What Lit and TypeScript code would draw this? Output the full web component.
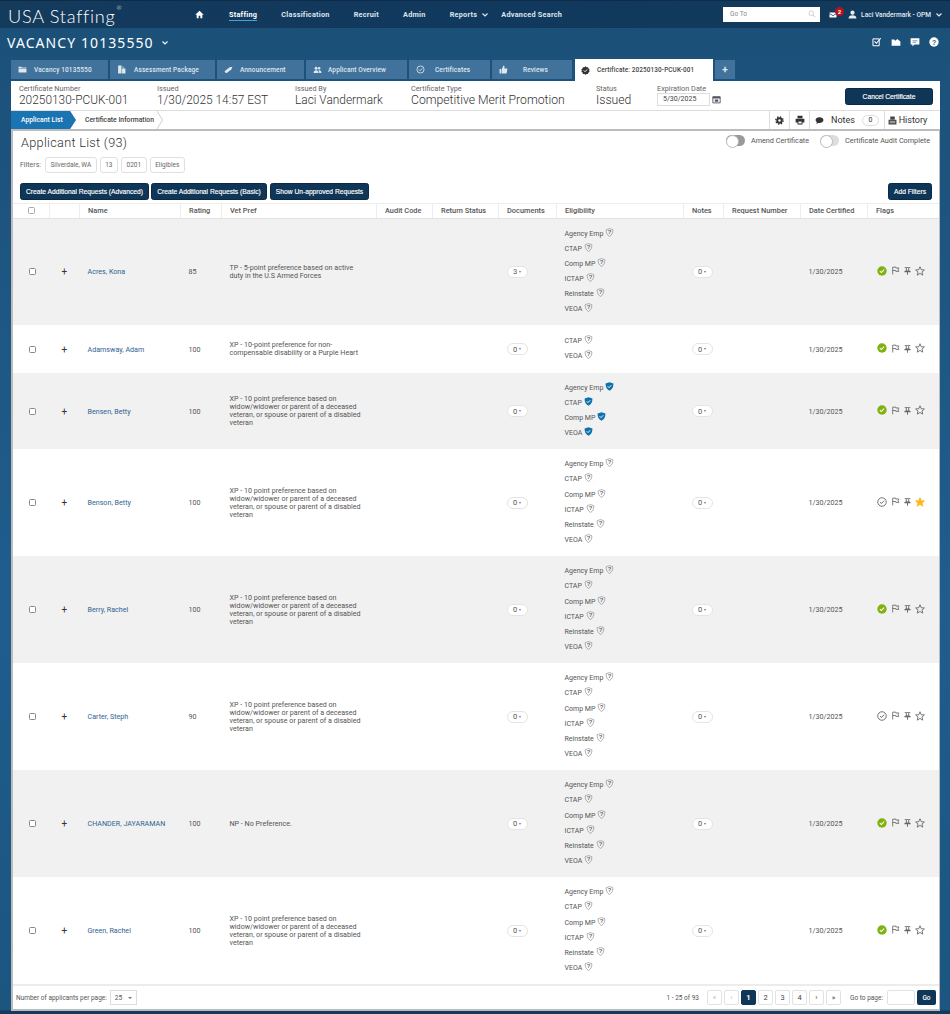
import { LitElement, html, css, svg } from "lit";
import { customElement } from "lit/decorators.js";

const XP = "XP - 10 point preference based on widow/widower or parent of a deceased veteran, or spouse or parent of a disabled veteran";
const ALL = ["Agency Emp", "CTAP", "Comp MP", "ICTAP", "Reinstate", "VEOA"];
interface Row { name: string; rating: string; vet: string; docs: string; elig: string[]; verified?: boolean; done: boolean; star?: boolean; }
const ROWS: Row[] = [
  { name: "Acres, Kona", rating: "85", vet: "TP - 5-point preference based on active duty in the U.S Armed Forces", docs: "3", elig: ALL, done: true },
  { name: "Adamsway, Adam", rating: "100", vet: "XP - 10-point preference for non-compensable disability or a Purple Heart", docs: "0", elig: ["CTAP", "VEOA"], done: true },
  { name: "Bensen, Betty", rating: "100", vet: XP, docs: "0", elig: ["Agency Emp", "CTAP", "Comp MP", "VEOA"], verified: true, done: true },
  { name: "Benson, Betty", rating: "100", vet: XP, docs: "0", elig: ALL, done: false, star: true },
  { name: "Berry, Rachel", rating: "100", vet: XP, docs: "0", elig: ALL, done: true },
  { name: "Carter, Steph", rating: "90", vet: XP, docs: "0", elig: ALL, done: false },
  { name: "CHANDER, JAYARAMAN", rating: "100", vet: "NP - No Preference.", docs: "0", elig: ALL, done: true },
  { name: "Green, Rachel", rating: "100", vet: XP, docs: "0", elig: ALL, done: true },
];
const COLS: [string, number][] = [["", 36], ["", 30], ["Name", 101], ["Rating", 41], ["Vet Pref", 155], ["Audit Code", 56], ["Return Status", 66], ["Documents", 58], ["Eligibility", 127], ["Notes", 40], ["Request Number", 77], ["Date Certified", 67], ["Flags", 72]];
const TABS: [string, number, string, number][] = [["Vacancy 10135550", 97, "folder", 7], ["Assessment Package", 105, "copy", 8], ["Announcement", 87, "mega", 7], ["Applicant Overview", 101, "users", 6], ["Certificates", 81, "check", 10], ["Reviews", 80, "thumb", 15]];

const ic = (body: unknown, size = 10, vb = "0 0 16 16") => html`<svg class="ic" width=${size} height=${size} viewBox=${vb}>${body}</svg>`;
const icons: Record<string, unknown> = {
  folder: svg`<path fill="currentColor" d="M1 3h5l1 1.500h8V6H1zM1 7h14v6.500H1z"/>`,
  copy: svg`<path fill="currentColor" d="M2 1h6v4h2V2l3 3H8v10H2zM9 6h6v9H9z"/>`,
  mega: svg`<path fill="currentColor" d="M1 11L10 4l5-1-2 5-8 6H3z"/>`,
  users: svg`<path fill="currentColor" d="M5.500 3a2.500 2.500 0 1 1 0 5.500 2.500 2.500 0 0 1 0-5.500zM1 14c0-3 2-4.500 4.500-4.500S10 11 10 14zM11 3.500a2.200 2.200 0 1 1 0 4.500 2.200 2.200 0 0 1 0-4.500zM11 14c0-2-.5-3.500-1.500-4.500 3-1 5.500.8 5.500 4.500z"/>`,
  check: svg`<circle cx="8" cy="8" r="6.300" fill="none" stroke="currentColor" stroke-width="1.500"/><path d="M5 8l2.200 2.200L11 6" fill="none" stroke="currentColor" stroke-width="1.500"/>`,
  thumb: svg`<path fill="currentColor" d="M1 7h3v8H1zM5 7l3-6c2 0 2 2 1.500 5H15l-1.500 9H5z"/>`,
};
const badgeCheck = ic(svg`<path fill="#333" d="M8 .5l2 1.500 2.500 0 .8 2.400 2 1.500L14.500 8l.8 2.100-2 1.500-.8 2.400-2.500 0-2 1.500-2-1.500-2.500 0-.8-2.400-2-1.500L1.500 8 .7 5.900l2-1.500L3.500 2l2.500 0z"/><path d="M5 8l2.200 2.200L11 6" fill="none" stroke="#fff" stroke-width="1.600"/>`, 9);
const shieldQ = ic(svg`<path d="M8 1l6 2c0 6-1.500 9.500-6 12C3.500 12.500 2 9 2 3z" fill="none" stroke="#8f8f8f" stroke-width="1.200"/><text x="8" y="11.500" font-size="10.500" font-weight="700" text-anchor="middle" fill="#666" font-family="Liberation Sans, sans-serif">?</text>`, 9);
const shieldOk = ic(svg`<path d="M8 .5l7 2.300c0 6.700-2 10-7 12.700C3 12.800 1 9.500 1 2.800z" fill="#0f71ab"/><path d="M4.800 7.600l2.300 2.300 4-4.100" fill="none" stroke="#fff" stroke-width="1.700"/>`, 9);
const flagIc = ic(svg`<path d="M3 15V2h5.500v1.500H14l-1.500 3 1.500 3H8.500V8H3" fill="none" stroke="#666" stroke-width="1.500"/>`, 9);
const pinIc = ic(svg`<path fill="#666" d="M3 2h10v1.600h-2V8l2.500 1.500V11H8.800v4.500H7.200V11H2.500V9.500L5 8V3.600H3zM6.600 3.600V8h2.800V3.600z"/>`, 9);
const starPts = "8,1.200 10,6 15,6.300 11.200,9.600 12.400,14.600 8,11.900 3.600,14.600 4.800,9.600 1,6.300 6,6";
const starIc = (on?: boolean) => ic(svg`<polygon points=${starPts} fill=${on ? "#fdb81e" : "none"} stroke=${on ? "#fdb81e" : "#666"} stroke-width="1.400"/>`, 10);
const doneIc = (done: boolean) => done
  ? ic(svg`<circle cx="8" cy="8" r="7.500" fill="#7fb10f"/><path d="M4.500 8.200l2.400 2.300 4.500-4.700" fill="none" stroke="#fff" stroke-width="1.700"/>`, 10)
  : ic(svg`<circle cx="8" cy="8" r="6.800" fill="none" stroke="#555" stroke-width="1.300"/><path d="M4.800 8.200l2.300 2.200 4.200-4.500" fill="none" stroke="#555" stroke-width="1.400"/>`, 10);

@customElement("app-root")
export class AppRoot extends LitElement {
  static styles = css`
    :host { display: block; width: 950px; height: 1014px; overflow: hidden; background: linear-gradient(#1b5078, #205d8d 60%, #1b5580 99.6%, #123a5c 99.7%); font-family: Roboto, sans-serif; color: #555; font-size: 7.500px; }
    * { box-sizing: border-box; }
    .ic { display: block; flex: none; }
    .top { height: 28px; background: linear-gradient(90deg, #143a5c, #11395d 50%, #123a5c); border-top: 1px solid #0e2c47; display: flex; align-items: center; color: #fff; }
    .logo { font-family: Lato, sans-serif; font-weight: 300; font-size: 18.200px; letter-spacing: .7px; margin-left: 8px; width: 187px; display: flex; position: relative; top: 1px; white-space: nowrap; }
    .logo sup { font-size: 6px; line-height: 1; margin-left: 1px; }
    .nav { display: flex; align-items: center; gap: 24px; font-weight: 700; font-size: 7.300px; letter-spacing: .25px; color: #dbe5ee; white-space: nowrap; }
    .nav .home { color: #fff; margin-right: 1px; }
    .nav .sel { color: #fff; border-bottom: 1px solid #3fa3e0; padding-bottom: 1px; margin-top: 1px; }
    .caret { display: inline-block; margin-left: 5px; }
    .nav .adv { margin-left: -11px; }
    .goto { margin-left: auto; width: 97px; height: 15px; background: #fff; color: #888; font-size: 6.500px; display: flex; align-items: center; justify-content: space-between; padding: 0 4px 0 7px; margin-top: -1px; }
    .mail { position: relative; margin-left: 9px; color: #fff; }
    .mail b { position: absolute; left: 6px; top: -4px; width: 9px; height: 9px; border-radius: 50%; background: #b3121d; font-size: 6px; color: #fff; display: flex; justify-content: center; align-items: center; }
    .user { display: flex; align-items: center; margin: 0 8px 0 11px; gap: 4px; color: #e4ebf2; font-size: 6.600px; font-weight: 500; white-space: nowrap; }
    .user .caret { margin-left: 1px; }
    .vac { height: 32px; display: flex; align-items: center; padding: 0 11px 4px 7px; color: #fff; }
    .vac h1 { margin: 0; font-weight: 400; font-size: 14px; letter-spacing: 1.080px; font-family: "Noto Sans", sans-serif; white-space: nowrap; }
    .vac .tools { margin-left: auto; display: flex; gap: 9px; color: #fff; }
    .tabs { height: 21px; padding-left: 11px; display: flex; align-items: flex-start; gap: 2px; }
    .tab { height: 19px; background: #41729b; color: #dfe8ef; display: flex; align-items: center; padding-left: 7px; font-size: 6.500px; font-weight: 500; letter-spacing: .12px; flex: none; white-space: nowrap; }
    .tab.active { background: #fff; color: #444; height: 22px; margin-left: 1px; margin-top: -1px; padding-left: 6px; gap: 7px; font-size: 6.400px; }
    .tab.plus { justify-content: center; padding: 0; font-size: 10px; font-weight: 700; }
    .card { margin: 0 10px 0 11px; background: #fff; }
    .cert { height: 30px; display: flex; padding: 3px 7px 0 8px; border-bottom: 1px solid #ddd; }
    .cf { display: flex; flex-direction: column; flex: none; }
    .cf label { font-size: 7.300px; color: #666; line-height: 9px; white-space: nowrap; }
    .cf span { font-size: 11.900px; font-weight: 300; color: #333; line-height: 14px; white-space: nowrap; }
    .cf span.wide { font-size: 12.200px; }
    .date { display: flex; gap: 2px; align-items: center; }
    .date div { width: 53px; height: 13px; border: 1px solid #ddd; font-size: 7px; padding-left: 5px; line-height: 11px; color: #444; }
    .btn { background: #0f3557; color: #fff; border-radius: 2.500px; border: 1px solid #0a2a47; font: 400 6.700px "Liberation Sans", sans-serif; -webkit-text-stroke: .15px #fff; display: flex; align-items: center; justify-content: center; height: 17px; flex: none; white-space: nowrap; }
    .cancel { width: 88px; margin: 4px 0 0 auto; }
    .crumb { height: 18px; display: flex; align-items: stretch; }
    .bc1 { width: 65px; background: #1b74b2; color: #fff; font-weight: 500; font-size: 6.800px; display: flex; align-items: center; padding-left: 10px; clip-path: polygon(0 0, 91% 0, 100% 50%, 91% 100%, 0 100%); white-space: nowrap; }
    .bc2 { width: 88px; margin-left: -1px; font-size: 6.800px; font-weight: 500; color: #444; display: flex; align-items: center; padding-left: 10px; position: relative; white-space: nowrap; }
    .bc2 svg { position: absolute; right: 0; top: 0; }
    .ctools { margin-left: auto; display: flex; margin-right: 10px; }
    .ctools > div { border-left: 1px solid #ddd; display: flex; align-items: center; justify-content: center; color: #333; }
    .t20 { width: 20px; }
    .tnotes { width: 75px; gap: 7px; font-size: 9px; color: #666; }
    .tnotes i { font-style: normal; border: 1px solid #ddd; border-radius: 7px; width: 17px; height: 11px; display: flex; justify-content: center; align-items: center; font-size: 7px; }
    .thist { width: 46px; gap: 2px; font-size: 9px; color: #555; }
    .main { border: 2px solid #bcbcbc; border-width: 2px 1px 2px 2px; height: 882px; background: #fff; display: flex; flex-direction: column; }
    .head { height: 72px; padding: 3px 7px 0 7px; display: flex; flex-direction: column; position: relative; }
    .hrow { display: flex; align-items: flex-start; }
    h2 { margin: 0; font-weight: 300; font-size: 12.700px; color: #333; line-height: 18px; letter-spacing: .3px; margin-left: 1px; white-space: nowrap; }
    .tog { display: flex; align-items: center; gap: 6px; margin-left: 11px; font-size: 7.250px; color: #555; margin-top: 1px; white-space: nowrap; }
    .tog i { display: block; width: 19px; height: 11px; border-radius: 6px; background: #999; position: relative; }
    .tog i.off { background: #ddd; }
    .tog i::after { content: ""; position: absolute; left: 0; top: 0; width: 11px; height: 11px; border-radius: 50%; background: #fff; border: 1px solid #bbb; }
    .hrow .tog:last-child { margin-right: 2px; }
    .filters { display: flex; align-items: center; gap: 3px; height: 16px; margin-top: 5px; font-size: 6.500px; color: #666; }
    .filters span { border: 1px solid #e0e0e0; border-radius: 3px; height: 16px; display: flex; align-items: center; padding: 0 4.500px; white-space: nowrap; }
    .filters label { width: 22px; font-size: 7px; }
    .btns { display: flex; gap: 2px; margin-top: 10px; }
    .btns .w3 { margin-left: 1px; }
    .btns .add { margin-left: auto; }
    table { border-collapse: collapse; table-layout: fixed; width: 926px; }
    th { height: 15px; font-weight: 500; font-size: 7.400px; color: #555; text-align: left; padding: 0 0 1px 8.500px; border-left: 1px solid #eee; border-top: 1px solid #eee; border-bottom: 1px solid #e2e2e2; white-space: nowrap; overflow: hidden; }
    th:first-child { border-left: 0; }
    td { padding: 0 0 0 8.500px; font-size: 7.150px; color: #555; vertical-align: middle; }
    tr.l2 td { height: 48px; }
    tr.l4 td { height: 76px; }
    tr.l6 td { height: 107px; }
    tbody tr:nth-child(odd) { background: #f1f1f1; }
    .cb { width: 7px; height: 7px; border: 1px solid #888; border-radius: 1.500px; background: #fff; margin-left: 7px; }
    th .cb { margin-left: 6px; border-color: #aaa; }
    td.plus { font-size: 10px; color: #333; padding-left: 12.500px; }
    td.name { color: #2f6393; }
    .vet { width: 136px; line-height: 8px; color: #555; }
    .pill { width: 21px; height: 12px; border: 1px solid #e4e4e4; border-radius: 6px; background: #fff; display: flex; align-items: center; justify-content: center; gap: 2px; font-size: 7.500px; }
    .pill::after { content: ""; border: 1.500px solid transparent; border-top: 2px solid #777; border-bottom: 0; }
    .el { height: 15.100px; display: flex; align-items: center; gap: 2px; line-height: 15px; font-size: 7px; }
    .el .ic { margin-top: -4px; }
    .flags { display: flex; gap: 3px; align-items: center; margin-top: -2px; padding-left: 1.500px; }
    .flags .ic:first-child { margin-right: 1px; }
    .spacer { flex: 1; }
    .foot { height: 25px; border-top: 2px solid #ececec; display: flex; align-items: center; padding: 0 3px 0 3px; font-size: 6.500px; color: #555; white-space: nowrap; }
    .sel25 { width: 27px; height: 15px; border: 1px solid #ddd; margin-left: 3px; display: flex; align-items: center; justify-content: space-between; padding: 0 4px; }
    .sel25::after { content: ""; border: 2px solid transparent; border-top: 2.500px solid #777; border-bottom: 0; }
    .count { margin-left: auto; margin-right: 8px; }
    .pg { width: 15px; height: 15px; border: 1px solid #e2e2e2; border-radius: 2px; display: flex; align-items: center; justify-content: center; margin-right: 2px; color: #444; font-size: 7.500px; }
    .pg.dis { color: #bbb; }
    .pg.cur { background: #0f3557; border-color: #0f3557; color: #fff; font-weight: 700; }
    .gotxt { margin: 0 4px 0 7px; }
    .inp { width: 28px; height: 15px; border: 1px solid #e2e2e2; border-radius: 2px; margin-right: 2px; }
    .go { width: 19px; height: 15px; background: #0f3557; color: #fff; border-radius: 2px; display: flex; align-items: center; justify-content: center; font-weight: 500; }
  `;

  render() {
    const chev = html`<svg class="caret" width="6" height="4" viewBox="0 0 6 4"><path d="M.5.500L3 3 5.500.500" fill="none" stroke="currentColor" stroke-width="1.200"/></svg>`;
    return html`
      <div class="top">
        <div class="logo">USA Staffing<sup>®</sup></div>
        <div class="nav">
          <span class="home">${ic(svg`<path fill="currentColor" d="M8 1.500L15.500 8.500H13V14.500H9.500V10h-3v4.500H3V8.500H.5z"/>`, 9)}</span>
          <span class="sel">Staffing</span><span>Classification</span><span>Recruit</span><span>Admin</span>
          <span>Reports${chev}</span><span class="adv">Advanced Search</span>
        </div>
        <div class="goto">Go To ${ic(svg`<circle cx="6.500" cy="6.500" r="4.500" fill="none" stroke="#bbb" stroke-width="1.400"/><path d="M10 10l4.500 4.500" stroke="#bbb" stroke-width="1.600"/>`, 8)}</div>
        <div class="mail">${ic(svg`<path fill="currentColor" d="M1 3h14v1.500L8 8.500 1 4.500zM1 6l7 4 7-4v7H1z"/>`, 8)}<b>2</b></div>
        <div class="user">${ic(svg`<path fill="currentColor" d="M8 1a3.500 3.500 0 1 1 0 7.500A3.500 3.500 0 0 1 8 1zM1 15c0-4 3-5.500 7-5.500s7 1.500 7 5.500z"/>`, 9)}<span>Laci Vandermark - OPM</span>${chev}</div>
      </div>
      <div class="vac">
        <h1>VACANCY 10135550</h1><span style="margin-left:3px">${chev}</span>
        <div class="tools">
          ${ic(svg`<path fill="none" stroke="currentColor" stroke-width="1.600" d="M1.500 3h10v11h-10z"/><path fill="none" stroke="currentColor" stroke-width="1.800" d="M4 7l3 3 7-8"/>`)}
          ${ic(svg`<path fill="currentColor" d="M1 4h4l2 2 3-3 5 4v7H1z"/>`)}
          ${ic(svg`<path fill="currentColor" d="M1 2h14v10H7l-3 3v-3H1z"/><path stroke="#2b6a9b" d="M4 6h8M4 8.500h6"/>`)}
          ${html`<svg class="ic" width="10" height="10" viewBox="0 0 16 16"><circle cx="8" cy="8" r="7.500" fill="currentColor"/><text x="8" y="12" font-size="11" font-weight="700" text-anchor="middle" fill="#215f90" font-family="Liberation Sans, sans-serif">?</text></svg>`}
        </div>
      </div>
      <div class="tabs">
        ${TABS.map(([t, w, i, g]) => html`<div class="tab" style="width:${w}px;gap:${g}px">${ic(icons[i], 9)}<span>${t}</span></div>`)}
        <div class="tab active" style="width:138px">${badgeCheck}<span>Certificate: 20250130-PCUK-001</span></div>
        <div class="tab plus" style="width:20px">+</div>
      </div>
      <div class="card">
        <div class="cert">
          <div class="cf" style="width:138px"><label>Certificate Number</label><span>20250130-PCUK-001</span></div>
          <div class="cf" style="width:138px"><label>Issued</label><span>1/30/2025 14:57 EST</span></div>
          <div class="cf" style="width:116px"><label>Issued By</label><span>Laci Vandermark</span></div>
          <div class="cf" style="width:185px"><label>Certificate Type</label><span class="wide">Competitive Merit Promotion</span></div>
          <div class="cf" style="width:61px"><label>Status</label><span class="wide">Issued</span></div>
          <div class="cf"><label>Expiration Date</label><div class="date"><div>5/30/2025</div>${ic(svg`<path fill="none" stroke="#556" stroke-width="1.600" d="M1.500 3h13v11h-13z"/><path fill="#556" d="M1.500 3h13v3h-13zM5 8h6v4H5z"/>`, 9)}</div></div>
          <div class="btn cancel">Cancel Certificate</div>
        </div>
        <div class="crumb">
          <div class="bc1">Applicant List</div>
          <div class="bc2">Certificate Information<svg width="6" height="18" viewBox="0 0 6 18"><path d="M0 0l5.500 9L0 18" fill="none" stroke="#ccc"/></svg></div>
          <div class="ctools">
            <div class="t20">${ic(svg`<circle cx="8" cy="8" r="4" fill="none" stroke="#333" stroke-width="3.500"/><circle cx="8" cy="8" r="6.500" fill="none" stroke="#333" stroke-width="2.500" stroke-dasharray="2.500 2.600"/>`, 9)}</div>
            <div class="t20">${ic(svg`<path fill="#333" d="M4 1h8v4H4zM1 6h14v6h-3v3H4v-3H1z"/><path fill="#fff" d="M5.500 10.500h5V13.500h-5z"/>`, 10)}</div>
            <div class="tnotes">${ic(svg`<path fill="#333" d="M8 2c4 0 7 2.300 7 5.300s-3 5.300-7 5.300c-.8 0-1.500 0-2.200-.2L2.500 14l.8-3C1.800 10 1 8.700 1 7.300 1 4.300 4 2 8 2z"/>`, 9)}<span>Notes</span><i>0</i></div>
            <div class="thist">${ic(svg`<path fill="#444" d="M4 1h8v5H4zM1 6.500h14V15H1z"/><path stroke="#fff" d="M3 9.500h10M3 12h10"/>`, 9)}<span>History</span></div>
          </div>
        </div>
        <div class="main">
          <div class="head">
            <div class="hrow"><h2>Applicant List (93)</h2><div class="spacer"></div>
              <div class="tog"><i></i>Amend Certificate</div>
              <div class="tog"><i class="off"></i>Certificate Audit Complete</div>
            </div>
            <div class="filters"><label>Filters:</label><span>Silverdale, WA</span><span>13</span><span>0201</span><span>Eligibles</span></div>
            <div class="btns">
              <div class="btn" style="width:129px">Create Additional Requests (Advanced)</div>
              <div class="btn" style="width:116px">Create Additional Requests (Basic)</div>
              <div class="btn w3" style="width:99px">Show Un-approved Requests</div>
              <div class="btn add" style="width:44px">Add Filters</div>
            </div>
          </div>
          <table>
            <colgroup>${COLS.map(([, w]) => html`<col style="width:${w}px">`)}</colgroup>
            <thead><tr>${COLS.map(([c], i) => html`<th>${i === 0 ? html`<div class="cb"></div>` : c}</th>`)}</tr></thead>
            <tbody>${ROWS.map((r) => html`
              <tr class="l${r.elig.length}">
                <td><div class="cb"></div></td>
                <td class="plus">+</td>
                <td class="name">${r.name}</td>
                <td>${r.rating}</td>
                <td><div class="vet">${r.vet}</div></td>
                <td></td><td></td>
                <td><div class="pill">${r.docs}</div></td>
                <td>${r.elig.map((e) => html`<div class="el">${e} ${r.verified ? shieldOk : shieldQ}</div>`)}</td>
                <td><div class="pill">0</div></td>
                <td></td>
                <td>1/30/2025</td>
                <td><div class="flags">${doneIc(r.done)}${flagIc}${pinIc}${starIc(r.star)}</div></td>
              </tr>`)}</tbody>
          </table>
          <div class="spacer"></div>
          <div class="foot">
            <span>Number of applicants per page:</span><div class="sel25">25</div>
            <span class="count">1 - 25 of 93</span>
            <div class="pg dis">«</div><div class="pg dis">‹</div><div class="pg cur">1</div><div class="pg">2</div><div class="pg">3</div><div class="pg">4</div><div class="pg">›</div><div class="pg">»</div>
            <span class="gotxt">Go to page:</span><div class="inp"></div><div class="go">Go</div>
          </div>
        </div>
      </div>
    `;
  }
}
